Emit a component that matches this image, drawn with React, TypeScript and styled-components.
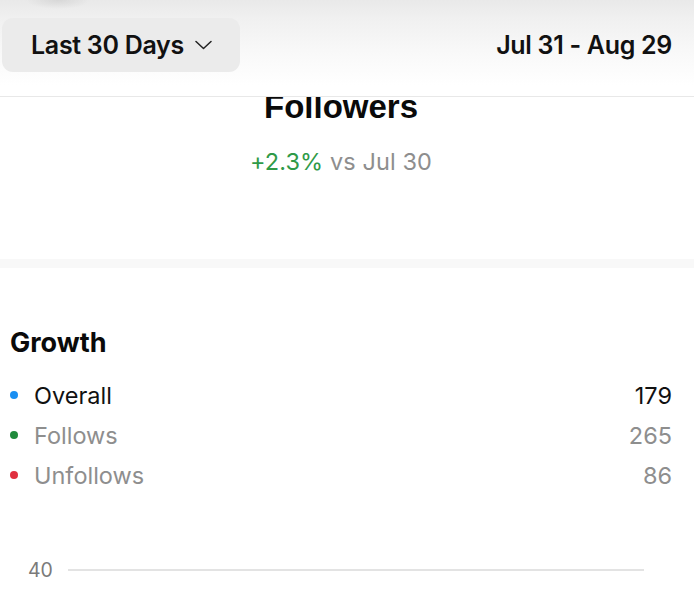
import React from "react";
import styled, { createGlobalStyle } from "styled-components";

const Global = createGlobalStyle`
  html, body { margin: 0; padding: 0; background: #ffffff; }
  body { font-family: Inter, "Liberation Sans", Arial, sans-serif; color: #000; -webkit-font-smoothing: antialiased; }
`;

const Page = styled.div`
  width: 694px;
  height: 602px;
  display: flex;
  flex-direction: column;
  overflow: hidden;
  background: #fff;
`;

const Header = styled.header`
  position: relative;
  flex: 0 0 auto;
  height: 97px;
  border-bottom: 1px solid #e8e8e8;
  background:
    radial-gradient(ellipse 32px 9px at 58px 0px, rgba(150,150,150,0.22), rgba(200,200,200,0) 100%),
    linear-gradient(180deg, #e9e9e9 0px, #f0f0f0 18px, #f8f8f8 50px, #ffffff 85px);
  display: flex;
  align-items: flex-start;
  justify-content: space-between;
  padding: 18px 22px 0 2px;
  box-sizing: border-box;
`;

const RangeButton = styled.button`
  display: flex;
  align-items: center;
  gap: 11px;
  height: 54px;
  width: 238px;
  padding: 0 0 0 29px;
  box-sizing: border-box;
  border: none;
  border-radius: 11px;
  background: #ebebeb;
  font-family: Inter, "Liberation Sans", sans-serif;
  font-weight: 600;
  font-size: 25px;
  color: #111;
  letter-spacing: -0.3px;
`;

const DateRange = styled.div`
  height: 54px;
  display: flex;
  align-items: center;
  font-weight: 600;
  font-size: 25px;
  color: #111;
  letter-spacing: -0.3px;
`;

const Content = styled.main`
  flex: 1 1 auto;
  overflow: hidden;
  display: flex;
  flex-direction: column;
`;

const Summary = styled.section`
  display: flex;
  flex-direction: column;
  align-items: center;
  height: 170px;
  margin-top: -8px;
  padding-right: 12px;
`;

const Title = styled.h1`
  margin: 0;
  font-family: "Liberation Sans", Arial, sans-serif;
  font-weight: 700;
  font-size: 33px;
  line-height: 36px;
  color: #0a0a0a;
`;

const Delta = styled.div`
  margin-top: 22px;
  font-size: 23.5px;
  color: #8e8e8e;
  letter-spacing: 0.1px;
`;

const Positive = styled.span`
  color: #2f9a48;
`;

const Band = styled.div`
  height: 9px;
  background: #f8f8f8;
  flex: 0 0 auto;
`;

const Growth = styled.section`
  padding: 59px 22px 0 10px;
  display: flex;
  flex-direction: column;
`;

const SectionTitle = styled.h2`
  margin: 0 0 16px 0;
  font-weight: 700;
  font-size: 27px;
  line-height: 32px;
  color: #0a0a0a;
`;

const LegendRow = styled.div`
  display: flex;
  align-items: center;
  height: 40px;
  font-size: 23.5px;
`;

const Dot = styled.span<{ $color: string }>`
  width: 8px;
  height: 8px;
  border-radius: 50%;
  background: ${(p) => p.$color};
  margin: 0 16px 0 0;
  flex: 0 0 auto;
`;

const Label = styled.span<{ $muted?: boolean }>`
  flex: 1;
  color: ${(p) => (p.$muted ? "#8e8e8e" : "#111")};
`;

const Value = styled.span<{ $muted?: boolean }>`
  color: ${(p) => (p.$muted ? "#8e8e8e" : "#111")};
`;

const Chart = styled.div`
  margin-top: 63px;
  display: flex;
  align-items: center;
  padding: 0 50px 0 28px;
  gap: 16px;
`;

const AxisLabel = styled.span`
  font-size: 19.5px;
  color: #7a7a7a;
  width: 24px;
`;

const GridLine = styled.div`
  flex: 1;
  height: 2px;
  background: #e3e3e3;
`;

const Chevron = () => (
  <svg width="17" height="10" viewBox="0 0 17 10" fill="none">
    <path d="M1 1.5 L8.5 8.5 L16 1.5" stroke="#222" strokeWidth="1.5" strokeLinecap="round" strokeLinejoin="round" />
  </svg>
);

const rows = [
  { label: "Overall", value: "179", color: "#1a8ff2", muted: false },
  { label: "Follows", value: "265", color: "#1f8a3b", muted: true },
  { label: "Unfollows", value: "86", color: "#e0303f", muted: true },
];

export default function App() {
  return (
    <Page>
      <Global />
      <Header>
        <RangeButton>
          Last 30 Days <Chevron />
        </RangeButton>
        <DateRange>Jul 31 - Aug 29</DateRange>
      </Header>
      <Content>
        <Summary>
          <Title>Followers</Title>
          <Delta>
            <Positive>+2.3%</Positive> vs Jul 30
          </Delta>
        </Summary>
        <Band />
        <Growth>
          <SectionTitle>Growth</SectionTitle>
          {rows.map((r) => (
            <LegendRow key={r.label}>
              <Dot $color={r.color} />
              <Label $muted={r.muted}>{r.label}</Label>
              <Value $muted={r.muted}>{r.value}</Value>
            </LegendRow>
          ))}
        </Growth>
        <Chart>
          <AxisLabel>40</AxisLabel>
          <GridLine />
        </Chart>
      </Content>
    </Page>
  );
}
